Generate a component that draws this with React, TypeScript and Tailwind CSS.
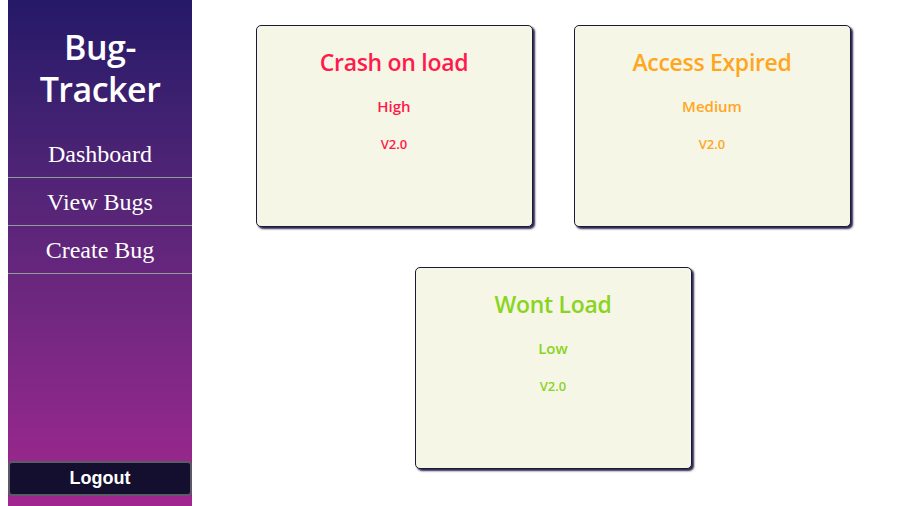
const bugs = [
  { title: 'Crash on load', priority: 'High', version: 'V2.0', color: 'text-[#ff1a4b]' },
  { title: 'Access Expired', priority: 'Medium', version: 'V2.0', color: 'text-[#ffa61f]' },
  { title: 'Wont Load', priority: 'Low', version: 'V2.0', color: 'text-[#8ad41f]' },
];

function BugCard({ title, priority, version, color }: (typeof bugs)[number]) {
  return (
    <div className={`w-[277px] h-[202px] bg-[#f6f6e7] border border-[#1c1838] rounded-[5px] shadow-[2px_2px_2px_#2a2650] flex flex-col items-center ${color}`}>
      <h2 className="mt-[20px] text-[23px] leading-[32px] font-semibold tracking-[-0.3px]">{title}</h2>
      <p className="mt-[18px] text-[15px] leading-[20px] font-semibold">{priority}</p>
      <p className="mt-[19px] text-[13px] leading-[18px] font-semibold">{version}</p>
    </div>
  );
}

export default function App() {
  return (
    <div className="flex h-[506px] bg-white font-['Open_Sans',sans-serif]">
      <aside className="ml-[8px] w-[184px] flex flex-col bg-gradient-to-b from-[#251968] to-[#a2268f]">
        <h1 className="mt-[26px] mb-[20px] text-center text-white text-[34px] leading-[42px] font-semibold tracking-[-0.5px]">
          Bug-
          <br />
          Tracker
        </h1>
        <nav className="flex flex-col font-['Liberation_Serif',serif] text-white text-[24px]">
          {['Dashboard', 'View Bugs', 'Create Bug'].map((item) => (
            <a key={item} className="h-[48px] flex items-center justify-center border-b border-[#8c9e94] cursor-pointer">
              {item}
            </a>
          ))}
        </nav>
        <button className="mt-auto mb-[10px] h-[35px] rounded-[4px] bg-[#140e2f] border-2 border-[#5c5a66] text-white font-['Liberation_Sans',sans-serif] font-bold text-[18px]">
          Logout
        </button>
      </aside>
      <main className="flex-1 pt-[25px] pr-[7px] flex flex-wrap justify-center content-start gap-x-[41px] gap-y-[40px]">
        {bugs.map((b) => (
          <BugCard key={b.title} {...b} />
        ))}
      </main>
    </div>
  );
}
